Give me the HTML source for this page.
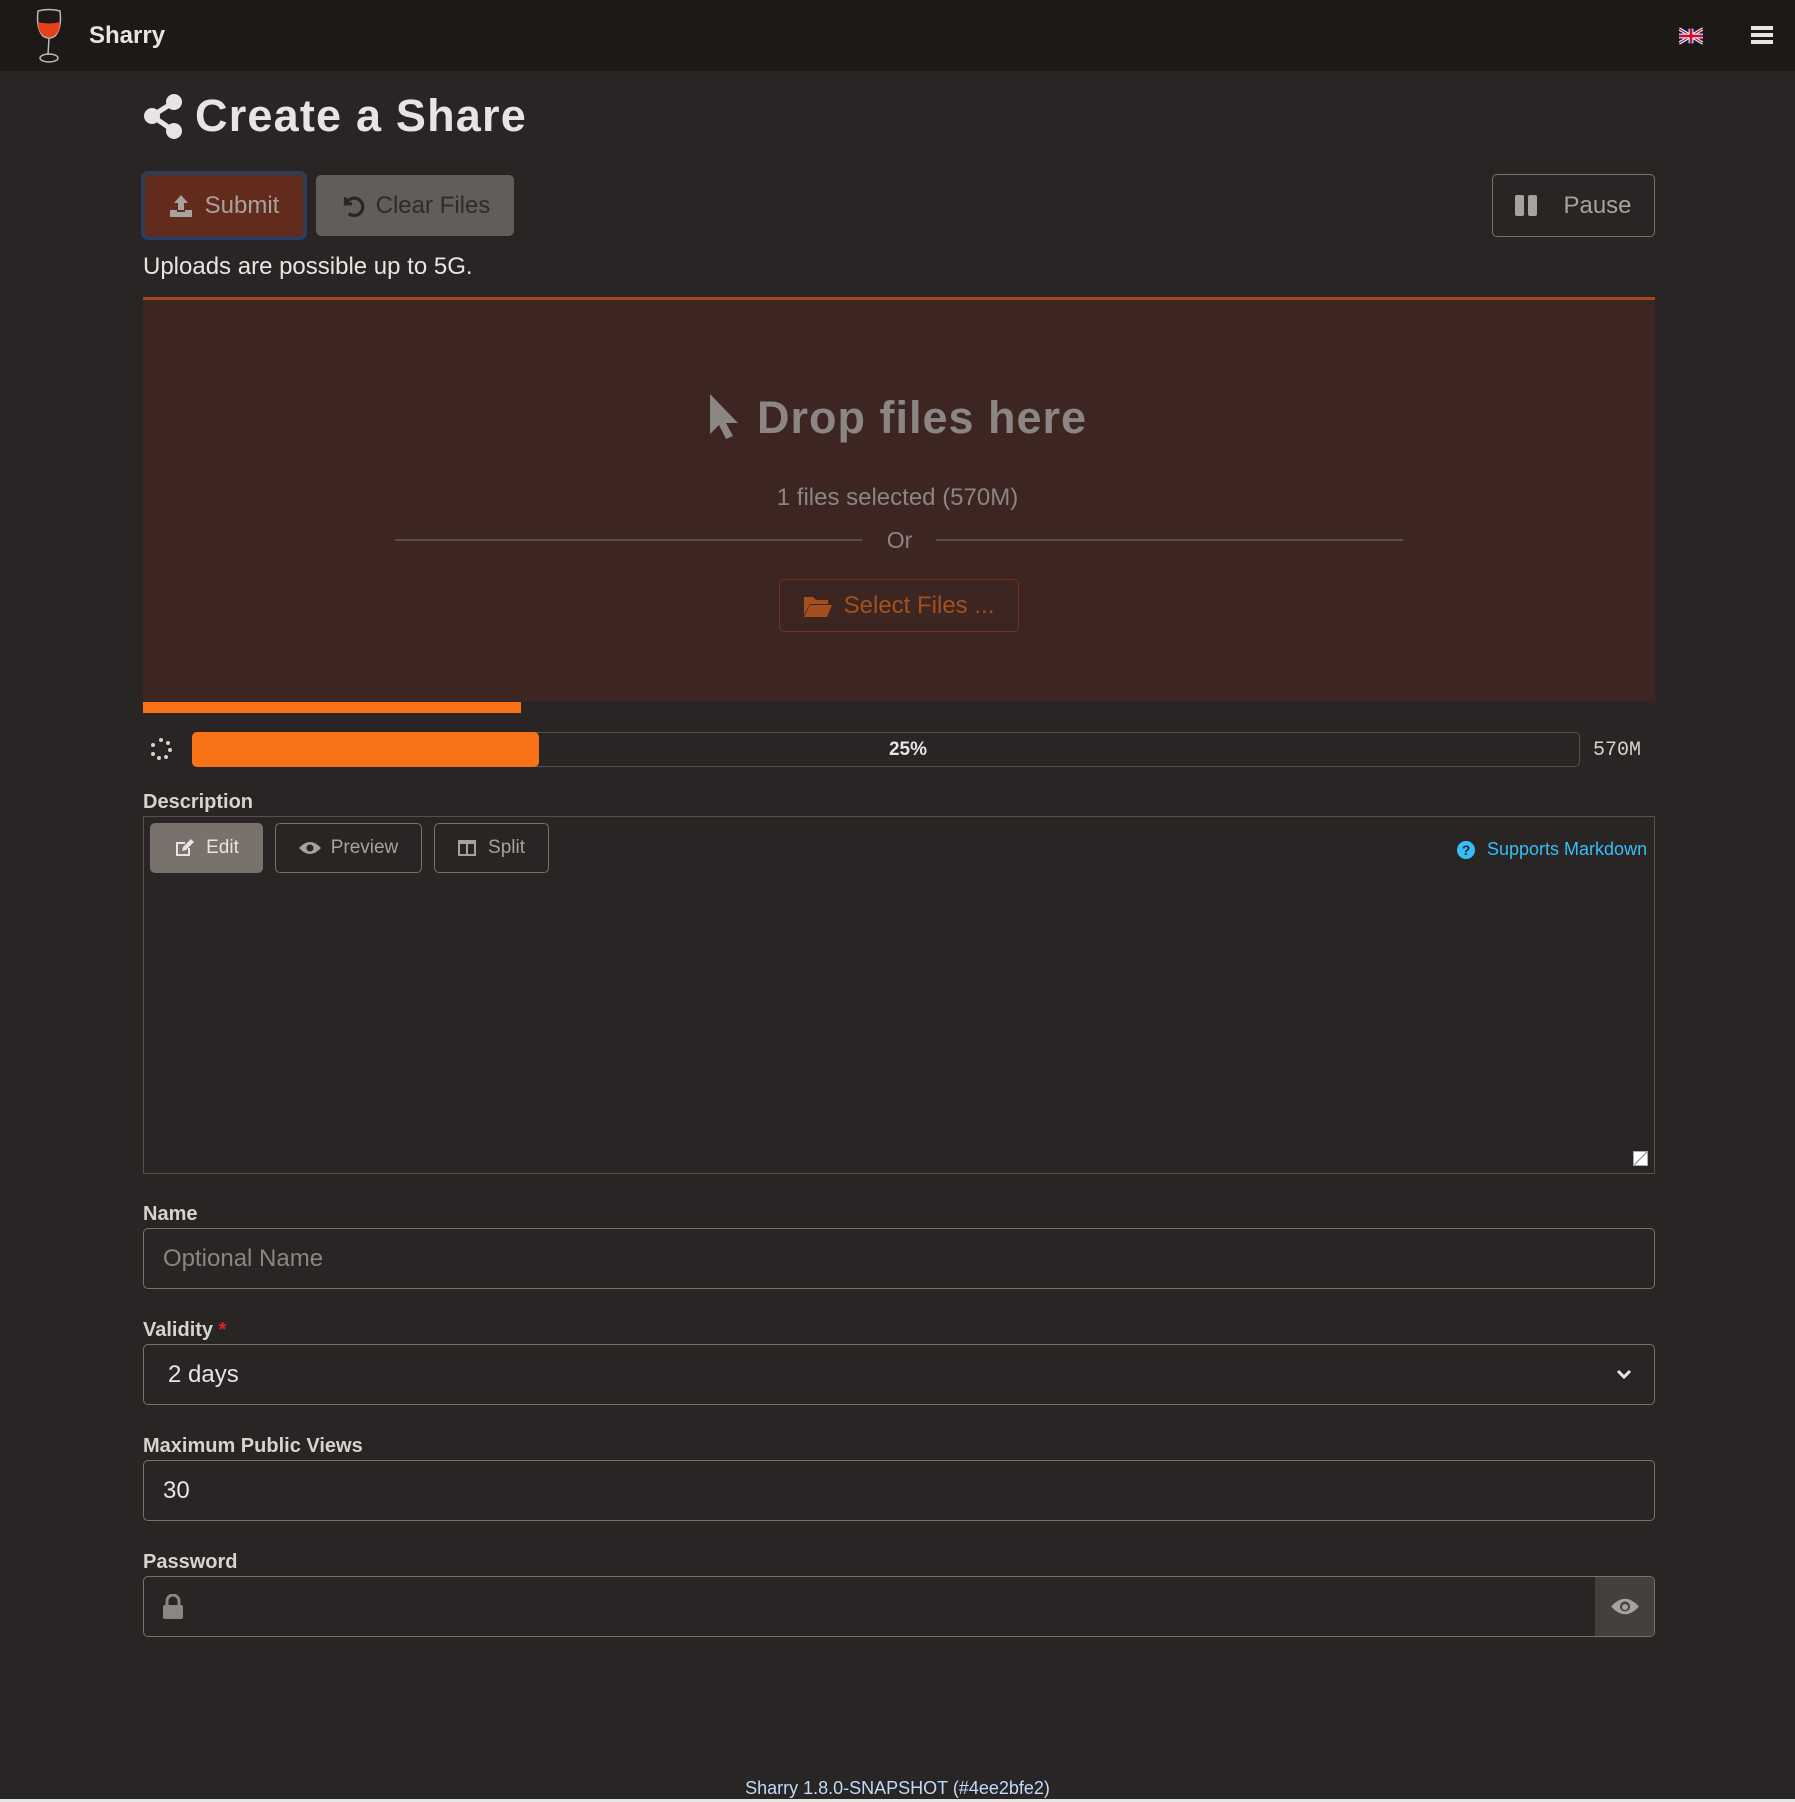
<!DOCTYPE html>
<html><head><meta charset="utf-8"><style>
*{box-sizing:border-box;margin:0;padding:0}
body{width:1795px;height:1802px;background:#292524;font-family:"Liberation Sans",sans-serif;color:#e7e5e4;position:relative;overflow:hidden}
.a{position:absolute}
.nav{left:0;top:0;width:1795px;height:71px;background:#1c1917}
.btn{position:absolute;display:flex;align-items:center;justify-content:center;border-radius:5px;font-size:24px}
.lbl{position:absolute;left:143px;font-size:20px;font-weight:bold;color:#d6d3d1}
.inp{position:absolute;left:143px;width:1512px;height:61px;border:1px solid #78716c;border-radius:5px;background:#292524;font-size:24px;display:flex;align-items:center;padding-left:19px}
</style></head><body>
<div class="a nav"></div>
<svg class="a" style="left:33px;top:8px" width="32" height="56" viewBox="0 0 32 56"><path d="M5 3 Q16 0 27 3 Q29 20 22 28 Q16 32 10 28 Q3 20 5 3Z" fill="none" stroke="#bbb" stroke-width="1.5"/><path d="M5 14 Q16 17 27 14 Q27 24 21 28 Q16 31 11 28 Q5 24 5 14Z" fill="#e8401c"/><path d="M16 30 L15 47" stroke="#bbb" stroke-width="1.5"/><ellipse cx="16" cy="50" rx="9" ry="4" fill="none" stroke="#bbb" stroke-width="1.5"/></svg>
<div class="a" style="left:89px;top:22px;font-size:24px;font-weight:bold;color:#e7e5e4">Sharry</div>
<svg class="a" style="left:1679px;top:27px" width="24" height="18" viewBox="0 0 60 36"><rect width="60" height="36" fill="#012169"/><path d="M0 0L60 36M60 0L0 36" stroke="#fff" stroke-width="8"/><path d="M0 0L60 36M60 0L0 36" stroke="#c8102e" stroke-width="3"/><path d="M30 0V36M0 18H60" stroke="#fff" stroke-width="12"/><path d="M30 0V36M0 18H60" stroke="#c8102e" stroke-width="7"/></svg>
<div class="a" style="left:1751px;top:26px;width:22px;height:4px;background:#e7e5e4;box-shadow:0 7px 0 #e7e5e4,0 14px 0 #e7e5e4"></div>

<svg class="a" style="left:143px;top:94px" width="40" height="45" viewBox="0 0 40 45"><g fill="#e7e5e4"><circle cx="31" cy="8" r="8"/><circle cx="9" cy="22" r="8"/><circle cx="31" cy="37" r="8"/></g><path d="M31 8L9 22L31 37" stroke="#e7e5e4" stroke-width="5" fill="none"/></svg>
<div class="a" style="left:195px;top:90px;font-size:45px;font-weight:bold;color:#e7e5e4;letter-spacing:1.2px">Create a Share</div>

<div class="btn" style="left:141px;top:171px;width:166px;height:69px;border:4px solid #2f3c5a;background:#622b1b;color:#a8a29e;border-radius:7px"><svg width="24" height="24" viewBox="0 0 24 24" style="margin-right:12px"><path d="M12 1L5 9h4v7h6V9h4z M1 16h7v2h8v-2h7v7H1z" fill="#a8a29e"/></svg>Submit</div>
<div class="btn" style="left:316px;top:175px;width:198px;height:61px;background:#625d5a;color:#2f2b2a"><svg width="26" height="26" viewBox="0 0 24 24" style="margin-right:10px"><path d="M5 4v6h6" fill="none" stroke="#2a2624" stroke-width="3"/><path d="M5.5 10A8 8 0 1 1 8 19" fill="none" stroke="#2a2624" stroke-width="3"/></svg>Clear Files</div>
<div class="btn" style="left:1492px;top:174px;width:163px;height:63px;border:1px solid #78716c;color:#a8a29e"><span style="display:inline-block;width:9px;height:21px;background:#a8a29e;border-radius:2px;margin-right:4px"></span><span style="display:inline-block;width:9px;height:21px;background:#a8a29e;border-radius:2px;margin-right:26px"></span>Pause</div>
<div class="a" style="left:143px;top:253px;font-size:24px;color:#e7e5e4">Uploads are possible up to 5G.</div>

<div class="a" style="left:143px;top:297px;width:1512px;height:404px;background:#3d2622;border-top:3px solid #a4481b"></div>
<svg class="a" style="left:708px;top:394px" width="32" height="46" viewBox="0 0 32 46"><path d="M2 0V40L11 31L18 45L25 42L18 29H30Z" fill="#8b8583"/></svg>
<div class="a" style="left:757px;top:392px;font-size:45px;font-weight:bold;color:#8b8583;letter-spacing:1px">Drop files here</div>
<div class="a" style="left:0;width:1795px;text-align:center;top:484px;font-size:24px;color:#8b8583">1 files selected (570M)</div>
<div class="a" style="left:395px;top:539px;width:467px;height:2px;background:#57504c"></div>
<div class="a" style="left:936px;top:539px;width:467px;height:2px;background:#57504c"></div>
<div class="a" style="left:2px;width:1795px;text-align:center;top:527px;font-size:23px;color:#8b8583">Or</div>
<div class="btn" style="left:779px;top:579px;width:240px;height:53px;border:1px solid #7a2e17;color:#a4501e"><svg width="28" height="22" viewBox="0 0 28 22" style="margin-right:12px"><path d="M0 2h9l3 3h12v4H6L0 20z M6 10h22l-5 12H0z" fill="#a4501e"/></svg>Select Files ...</div>

<div class="a" style="left:143px;top:702px;width:378px;height:11px;background:#f97316"></div>
<svg class="a" style="left:149px;top:737px" width="24" height="24" viewBox="0 0 24 24" fill="#d6d3d1"><circle cx="12" cy="3" r="2"/><circle cx="19" cy="6" r="2"/><circle cx="21" cy="13" r="2"/><circle cx="17" cy="20" r="2"/><circle cx="10" cy="21" r="2"/><circle cx="4" cy="17" r="2"/><circle cx="4" cy="8" r="2"/></svg>
<div class="a" style="left:192px;top:732px;width:1388px;height:35px;border:1px solid #57504c;border-radius:5px"></div>
<div class="a" style="left:192px;top:732px;width:347px;height:35px;background:#f97316;border-radius:5px"></div>
<div class="a" style="left:214px;width:1388px;text-align:center;top:739px;font-size:19px;font-weight:bold;color:#e7e5e4">25%</div>
<div class="a" style="left:1593px;top:739px;font-size:20px;font-family:'Liberation Mono',monospace;color:#d6d3d1">570M</div>

<div class="lbl" style="top:791px">Description</div>
<div class="a" style="left:143px;top:816px;width:1512px;height:358px;border:1px solid #57504c"></div>
<div class="btn" style="left:150px;top:823px;width:113px;height:50px;background:#78716c;color:#e7e5e4;font-size:19px"><svg width="22" height="20" viewBox="0 0 22 20" style="margin-right:10px"><path d="M2 4h9v2H4v10h10v-6h2v8H2z" fill="#e7e5e4"/><path d="M8 13l1-4 8-8 3 3-8 8z" fill="#e7e5e4"/></svg>Edit</div>
<div class="btn" style="left:275px;top:823px;width:147px;height:50px;border:1px solid #78716c;color:#a8a29e;font-size:19px"><svg width="22" height="14" viewBox="0 0 22 14" style="margin-right:10px"><path d="M0 7Q11-5 22 7Q11 19 0 7Z" fill="#a8a29e"/><circle cx="11" cy="7" r="3.5" fill="#292524"/></svg>Preview</div>
<div class="btn" style="left:434px;top:823px;width:115px;height:50px;border:1px solid #78716c;color:#a8a29e;font-size:19px"><svg width="18" height="16" viewBox="0 0 18 16" style="margin-right:12px"><path d="M0 0h18v16H0z M2 4v10h6V4z M10 4v10h6V4z" fill="#a8a29e" fill-rule="evenodd"/></svg>Split</div>
<div class="a" style="left:1457px;top:839px;font-size:18px;color:#38bdf8;display:flex;align-items:center"><span style="display:inline-block;width:18px;height:18px;border-radius:50%;background:#38bdf8;color:#292524;font-size:14px;font-weight:bold;text-align:center;line-height:18px;margin-right:12px">?</span>Supports Markdown</div>
<div class="a" style="left:1633px;top:1151px;width:15px;height:15px;background:linear-gradient(135deg,#fff 45%,#777 50%,#fff 55%);border:1px solid #aaa"></div>

<div class="lbl" style="top:1203px">Name</div>
<div class="inp" style="top:1228px;color:#8b8583">Optional Name</div>
<div class="lbl" style="top:1319px">Validity <span style="color:#dc2626">*</span></div>
<div class="inp" style="top:1344px;padding-left:24px">2 days<svg class="a" style="right:22px;top:24px" width="16" height="12" viewBox="0 0 16 12"><path d="M2 2l6 6 6-6" fill="none" stroke="#e7e5e4" stroke-width="3"/></svg></div>
<div class="lbl" style="top:1435px">Maximum Public Views</div>
<div class="inp" style="top:1460px">30</div>
<div class="lbl" style="top:1551px">Password</div>
<div class="inp" style="top:1576px;overflow:hidden"><svg width="22" height="26" viewBox="0 0 22 26" style="margin-left:-1px"><path d="M5 11V7a6 6 0 0 1 12 0v4" fill="none" stroke="#8b8583" stroke-width="3"/><rect x="1" y="11" width="20" height="14" rx="2" fill="#8b8583"/></svg><div class="a" style="right:0;top:0;width:59px;height:59px;background:#44403c;display:flex;align-items:center;justify-content:center"><svg width="28" height="19" viewBox="0 0 28 19"><path d="M0 9.5Q14-6 28 9.5Q14 25 0 9.5Z" fill="#a8a29e"/><circle cx="14" cy="9.5" r="5" fill="#44403c"/><circle cx="14" cy="10" r="3" fill="#a8a29e"/></svg></div></div>

<div class="a" style="left:0;width:1795px;text-align:center;top:1778px;font-size:18px;color:#bfdbfe">Sharry 1.8.0-SNAPSHOT (#4ee2bfe2)</div>
<div class="a" style="left:0;top:1799px;width:1795px;height:3px;background:#e5e5e5"></div>
</body></html>
